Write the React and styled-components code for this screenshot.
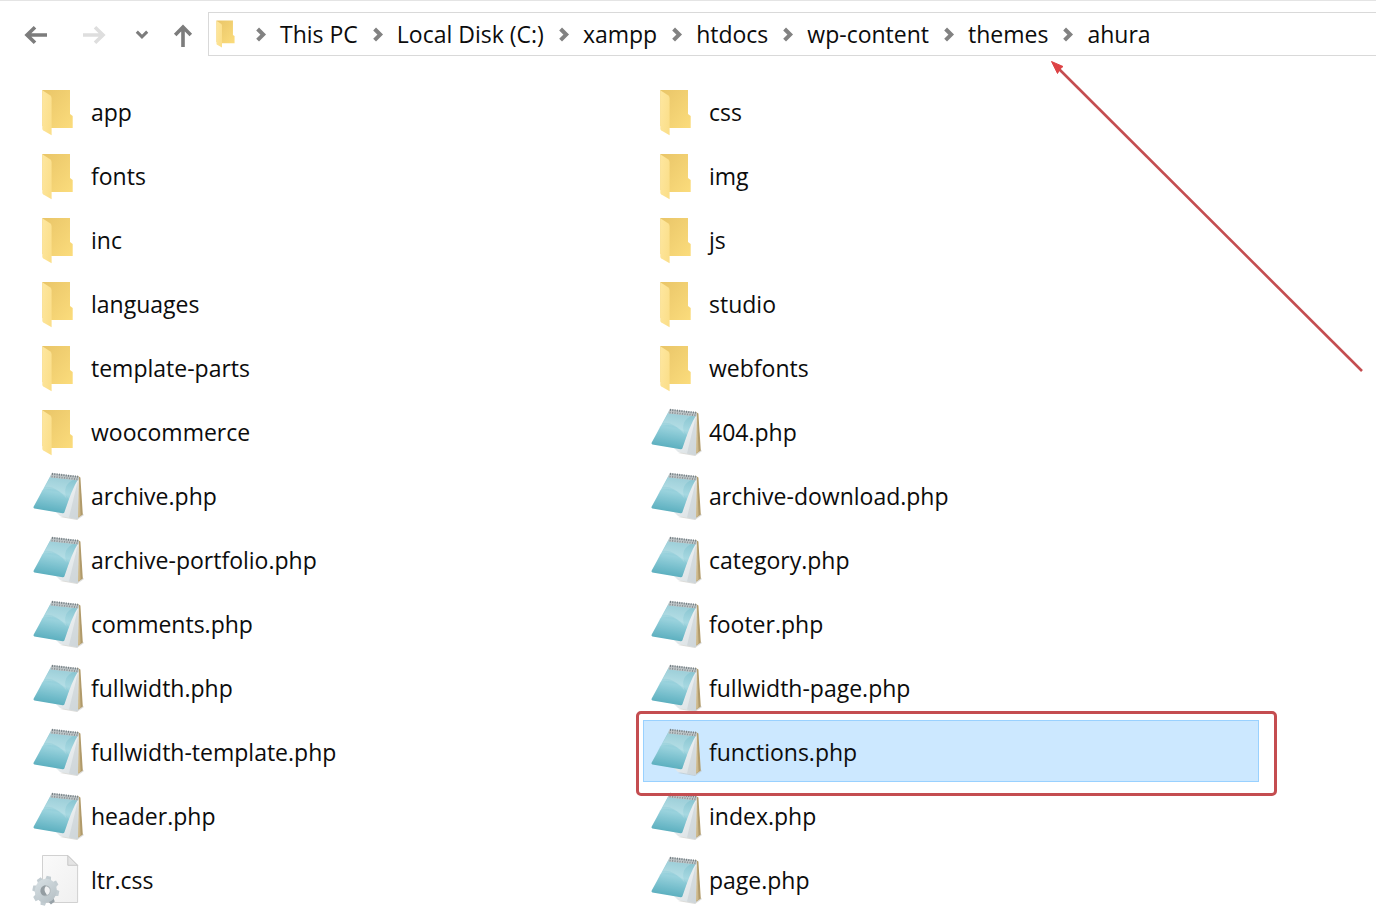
import React from "react";
import styled, { createGlobalStyle } from "styled-components";

const GlobalStyle = createGlobalStyle`
  *, *::before, *::after { box-sizing: border-box; }
  body {
    margin: 0;
    background: #fff;
    color: #0c0c0c;
    font-family: "Open Sans", "Noto Sans", sans-serif;
    font-size: 23px;
    line-height: 32px;
  }
`;

const Page = styled.div`
  position: relative;
  min-height: 100vh;
  overflow: hidden;
  border-top: 1px solid #e4e4e4;
`;

const Toolbar = styled.header`
  display: flex;
  align-items: center;
  padding: 11px 0 0 16px;
`;

const NavButton = styled.button`
  display: flex;
  flex: none;
  align-items: center;
  justify-content: center;
  width: ${(p) => p.$width}px;
  height: 44px;
  padding: 0;
  border: 0;
  background: none;
  color: ${(p) => (p.disabled ? "#dedede" : "#7c7c7c")};
`;

const NavGroup = styled.div`
  display: flex;
  flex: none;
  gap: ${(p) => p.$gap}px;
`;

const AddressBar = styled.nav`
  display: flex;
  flex: 1;
  align-items: center;
  height: 44px;
  margin-left: 12px;
  padding-left: 7px;
  border: 1px solid #d9d9d9;
  border-right: 0;
  white-space: nowrap;
`;

const Crumbs = styled.ol`
  display: flex;
  margin: 0;
  padding: 0 0 0 6px;
  list-style: none;
`;

const Crumb = styled.li`
  display: flex;
  align-items: center;
`;

const CrumbLink = styled.a`
  color: inherit;
  text-decoration: none;
`;

const Separator = styled.svg`
  flex: none;
  width: 10px;
  height: 16px;
  margin: 0 14px 0 15px;
  overflow: visible;
`;

const FileGrid = styled.ul`
  display: grid;
  grid-template-columns: 1fr 1fr;
  gap: 2px;
  margin: 0;
  padding: 24px 117px 10px 25px;
  list-style: none;
`;

const FileCell = styled.li`
  position: relative;
`;

const FileButton = styled.button`
  display: flex;
  align-items: center;
  gap: 8px;
  width: 100%;
  height: 62px;
  padding: 0 7px;
  border: 1px solid ${(p) => (p.$selected ? "#99d1ff" : "transparent")};
  background: ${(p) => (p.$selected ? "#cce8ff" : "none")};
  color: inherit;
  font: inherit;
  text-align: left;
`;

const FileName = styled.span`
  padding-top: 2px;
`;

const Icon = styled.svg`
  flex: none;
  width: ${(p) => p.$width || 50}px;
  height: ${(p) => p.$height || 50}px;
  overflow: visible;
`;

const Highlight = styled.div`
  position: absolute;
  z-index: 1;
  inset: -9px -18px -14px -7px;
  border: 3px solid #c44d50;
  border-radius: 5px;
  pointer-events: none;
`;

const Pointer = styled.svg`
  position: absolute;
  top: 59px;
  left: 1050px;
  width: 314px;
  height: 314px;
  pointer-events: none;
`;

const FolderIcon = ({ width, height, viewBox = "0 0 50 50" }) => (
  <Icon $width={width} $height={height} viewBox={viewBox} aria-hidden="true">
    <path d="M9.3 4H37V28l2.7 2V42H18L9.3 40Z" fill="url(#folderBack)" />
    <path d="M9.3 4.3 17 9.2Q18.6 10.3 18.6 12V49.2L10.3 44.6Q9.3 44 9.3 42.6Z" fill="url(#folderFlap)" />
  </Icon>
);

const NotepadIcon = () => (
  <Icon viewBox="0 0 50 50" aria-hidden="true">
    <path d="M27 47 44 50 51 45 47 41Z" fill="#b9b9b4" opacity="0.5" />
    <path d="M44 5.5 47.4 7.4 49.8 44.5 43 49Z" fill="#b09a6a" />
    <path d="M44 7 46 8 47.6 45.5 43.5 48.2Z" fill="#cdb88a" />
    <path d="M19 5 45.8 8 45 49.2 27 46 22 41Z" fill="url(#padPages)" />
    <path d="M44.8 11 45 49.2 36 47.6Z" fill="#c3ccd0" opacity="0.5" />
    <path d="M17.6 5.6 45.2 9Q39 19 31.4 42.2Q31 43.4 29.6 43.2L1.4 38.4Q0 38 .7 36.6Z" fill="url(#padCover)" />
    <path d="M9 20Q24 16 36 29L31.2 42.8 2 38Z" fill="#57b6c5" opacity="0.16" />
    <path d="M12 17Q22 15 34 29Q28 15 42 9L17.6 6Z" fill="#fff" opacity="0.16" />
    <path d="M18 4.2Q18 3.2 19 3.3L45 6.2Q46.4 6.4 46 8.6L45.2 10.4 17.2 7.4Z" fill="#c2c8ca" />
    <path d="M19 3.8 45 6.8" stroke="#737e83" strokeWidth="2" strokeDasharray="1.1 1.2" />
    <path d="M18.5 6.5 45 9.3" stroke="#8b9599" strokeWidth="1.8" strokeDasharray="1.2 1.3" />
  </Icon>
);

const teeth = [0, 45, 90, 135, 180, 225, 270, 315];

const SettingsFileIcon = () => (
  <Icon viewBox="0 0 50 50" aria-hidden="true">
    <path d="M9.5 1.5H34.8L44.6 11.3V48.5H9.5Z" fill="url(#sheet)" stroke="#cccccc" strokeWidth="0.9" />
    <path d="M34.8 1.5V11.3H44.6Z" fill="#e4e4e4" stroke="#c4c4c4" strokeWidth="0.9" />
    <g transform="translate(12.8 36.8) rotate(12) scale(.9 1)">
      {teeth.map((angle) => (
        <path key={angle} d="M-3.4-10-2.5-14.8H2.5L3.4-10Z" transform={`rotate(${angle})`} fill={angle === 135 ? "#98a2a8" : "#c3cdd2"} />
      ))}
      <circle r="8.6" fill="none" stroke="url(#gear)" strokeWidth="7" />
      <circle r="5" fill="#f1f2f3" stroke="#aab3b8" strokeWidth="1" />
      <path d="M-1-5A5 5 0 0 0-1 5Q1.4 4.8 2 3.6Q-3.6 0-1-5Z" fill="#949da2" />
    </g>
  </Icon>
);

const ArrowGlyph = ({ up }) => (
  <Icon $width={24} $height={24} viewBox="0 0 24 24" aria-hidden="true">
    <path
      d={up ? "M12 25V5M4.2 13 12 5 19.8 13" : "M23 13H3M11 5.2 3 13 11 20.8"}
      fill="none"
      stroke="currentColor"
      strokeWidth={3.6}
    />
  </Icon>
);

const crumbs = ["This PC", "Local Disk (C:)", "xampp", "htdocs", "wp-content", "themes", "ahura"];

const files = [
  "app", "css",
  "fonts", "img",
  "inc", "js",
  "languages", "studio",
  "template-parts", "webfonts",
  "woocommerce", "404.php",
  "archive.php", "archive-download.php",
  "archive-portfolio.php", "category.php",
  "comments.php", "footer.php",
  "fullwidth.php", "fullwidth-page.php",
  "fullwidth-template.php", "functions.php",
  "header.php", "index.php",
  "ltr.css", "page.php",
];

const FileIcon = ({ name }) => {
  if (name.endsWith(".php")) return <NotepadIcon />;
  if (name.endsWith(".css")) return <SettingsFileIcon />;
  return <FolderIcon />;
};

const GradientSheet = styled.svg`
  position: absolute;
  width: 0;
  height: 0;
`;

const Gradients = () => (
  <GradientSheet aria-hidden="true">
    <defs>
      <linearGradient id="folderBack" x1="0" x2="1" y2="1">
        <stop offset="0" stopColor="#e9c568" />
        <stop offset="1" stopColor="#fbdc7c" />
      </linearGradient>
      <linearGradient id="folderFlap" x1="0" x2="1" y2="0.6">
        <stop offset="0" stopColor="#fee7a0" />
        <stop offset="1" stopColor="#fbdf8b" />
      </linearGradient>
      <linearGradient id="padCover" x1="0.6" x2="0.4" y2="1">
        <stop offset="0" stopColor="#86c3cf" />
        <stop offset="0.45" stopColor="#a6d8e1" />
        <stop offset="1" stopColor="#58acbc" />
      </linearGradient>
      <linearGradient id="padPages" x1="0.4" x2="1" y2="1">
        <stop offset="0" stopColor="#f4f6f7" />
        <stop offset="1" stopColor="#d9e0e3" />
      </linearGradient>
      <linearGradient id="sheet" x1="0" x2="1" y2="1">
        <stop offset="0" stopColor="#fafafa" />
        <stop offset="1" stopColor="#f0f0f0" />
      </linearGradient>
      <linearGradient id="gear" x1="0" x2="1" y2="1">
        <stop offset="0" stopColor="#d3dce0" />
        <stop offset="1" stopColor="#b9c3c8" />
      </linearGradient>
    </defs>
  </GradientSheet>
);

export default function App() {
  return (
    <Page>
      <GlobalStyle />
      <Gradients />
      <Toolbar>
        <NavGroup $gap={18}>
          <NavButton $width={40} aria-label="Back"><ArrowGlyph /></NavButton>
          <NavButton $width={40} aria-label="Forward" disabled>
            <svg width="24" height="24" viewBox="0 0 24 24" aria-hidden="true">
              <path d="M1 13H21M13 5.2 21 13 13 20.8" fill="none" stroke="currentColor" strokeWidth="3.6" />
            </svg>
          </NavButton>
        </NavGroup>
        <NavGroup $gap={0}>
          <NavButton $width={56} aria-label="Recent locations">
            <svg width="14" height="10" viewBox="0 0 14 10" aria-hidden="true">
              <path d="M1.8 2.6 7 7.8 12.2 2.6" fill="none" stroke="currentColor" strokeWidth="3" />
            </svg>
          </NavButton>
          <NavButton $width={26} aria-label="Up"><ArrowGlyph up /></NavButton>
        </NavGroup>
        <AddressBar aria-label="Address">
          <FolderIcon width={19} height={28} viewBox="9 3 31 47" />
          <Crumbs>
            {crumbs.map((crumb) => (
              <Crumb key={crumb}>
                <Separator viewBox="0 0 10 16" aria-hidden="true">
                  <path d="M1.6 3 7.2 8.6 1.6 14.2" fill="none" stroke="#828282" strokeWidth="4" />
                </Separator>
                <CrumbLink href="#">{crumb}</CrumbLink>
              </Crumb>
            ))}
          </Crumbs>
        </AddressBar>
      </Toolbar>
      <FileGrid>
        {files.map((name) => {
          const selected = name === "functions.php";
          return (
            <FileCell key={name}>
              <FileButton $selected={selected}>
                {name === "css" ? <FolderIcon /> : <FileIcon name={name} />}
                <FileName>{name}</FileName>
              </FileButton>
              {selected && <Highlight />}
            </FileCell>
          );
        })}
      </FileGrid>
      <Pointer viewBox="0 0 314 314" aria-hidden="true">
        <path d="M8 8 312 311" stroke="#c44d50" strokeWidth="2.6" />
        <path d="M1.5 1.5 13 6.5 10 9 7.5 13.5Z" fill="#dd4345" stroke="#dd4345" />
      </Pointer>
    </Page>
  );
}
